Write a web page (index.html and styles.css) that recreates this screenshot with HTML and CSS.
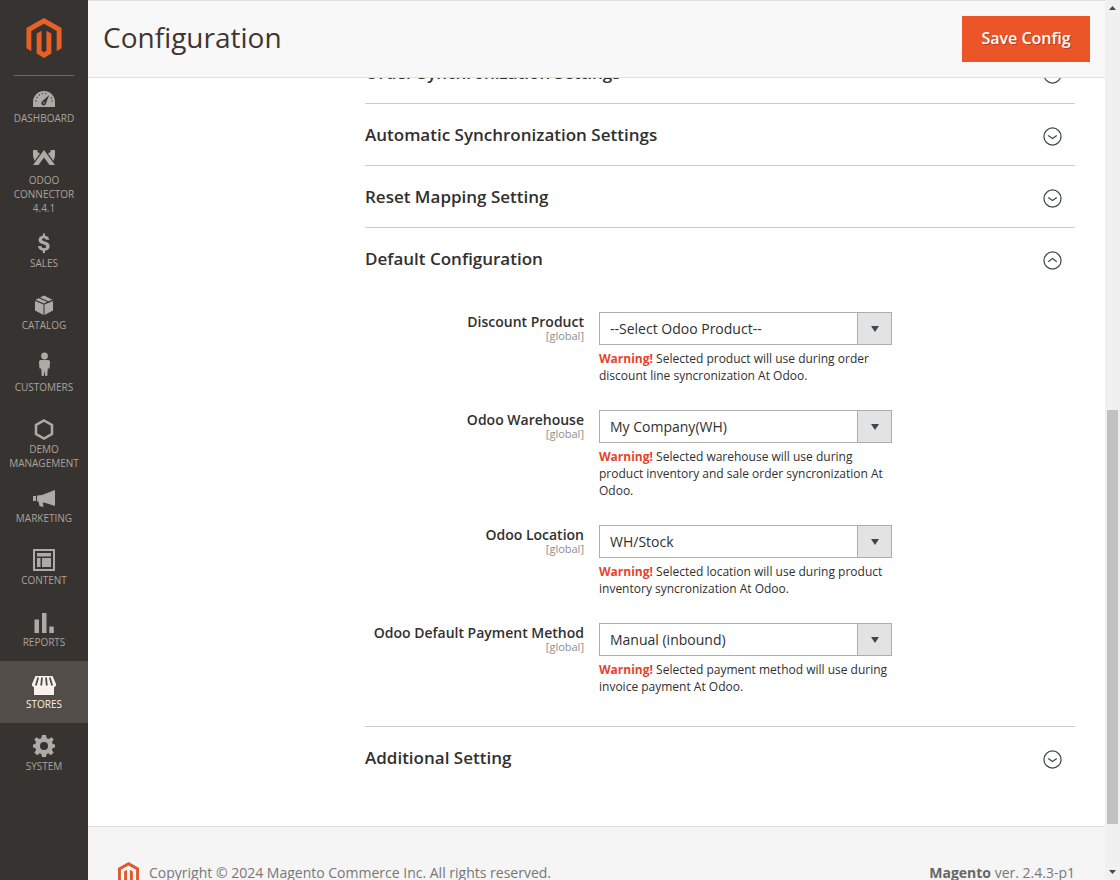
FILE: index.html
```html
<!DOCTYPE html>
<html lang="en">
<head>
<meta charset="utf-8">
<title>Configuration / Magento Admin</title>
<link rel="stylesheet" href="styles.css">
</head>
<body>
<svg class="defs" aria-hidden="true">
  <symbol id="magento" viewBox="0 0 36 41">
    <path d="M18 0L36 10.300V31L31 34V13.300L18 5.800L5 13.300V34L0 31V10.300Z"/>
    <path d="M10.500 16L15.500 13V33.500L18 35L20.500 33.500V13L25.500 16V36.500L18 41L10.500 36.500Z"/>
  </symbol>
  <symbol id="down" viewBox="0 0 20 20"><circle cx="10" cy="10" r="9"/><path d="M5.500 9L10 12.200L14.500 9"/></symbol>
  <symbol id="up" viewBox="0 0 20 20"><circle cx="10" cy="10" r="9"/><path d="M5.500 11.200L10 8L14.500 11.200"/></symbol>
</svg>
<div class="app">
  <nav class="menu" aria-label="Main">
    <a class="logo" href="#" aria-label="Magento"><svg><use href="#magento"/></svg></a>
    <ul class="menu-list">
      <li><a class="item" href="#"><svg viewBox="0 -1 24 24"><path d="M1 20V15a11 11 0 0 1 22 0V20Z"/><g class="cut"><circle cx="4" cy="14" r=".7"/><circle cx="5" cy="10.500" r=".7"/><circle cx="7.500" cy="8" r=".7"/><circle cx="10.500" cy="6.600" r=".7"/><circle cx="13.700" cy="6.600" r=".7"/><circle cx="19.300" cy="11" r=".7"/><circle cx="20" cy="14" r=".7"/><path d="M17.200 8L10.300 14.200a2.300 2.300 0 1 0 3.600 2.300Z"/></g><circle cx="11.900" cy="15.800" r=".8"/></svg><span>Dashboard</span></a></li>
      <li><a class="item" href="#"><svg viewBox="0 0 24 24"><path d="M12 2L23 17H17.500L12 9.500L6.500 17H1Z"/><path d="M1 2H5.500V4L8 5.500L2.500 13L1 8Z"/><path d="M23 2H18.500V4L16 5.500L21.500 13L23 8Z"/></svg><span>Odoo Connector 4.4.1</span></a></li>
      <li><a class="item" href="#"><svg viewBox="0 0 24 24"><path d="M10.800 2.500H13V4.700C15.500 5 17 6.500 17.300 8.800H14C13.700 7.700 13 7.200 12 7.200C10.800 7.200 10 7.700 10 8.600C10 9.500 10.800 9.800 13 10.400C16 11.200 17.600 12.600 17.600 15.200C17.600 17.700 15.900 19.400 13 19.700V22H10.800V19.700C8 19.400 6.200 17.700 6 15H9.300C9.600 16.600 10.500 17.200 12 17.200C13.400 17.200 14.200 16.500 14.200 15.500C14.200 14.400 13.400 13.900 11 13.300C8.100 12.500 6.600 11.300 6.600 8.800C6.600 6.500 8.300 5 10.800 4.700Z"/></svg><span>Sales</span></a></li>
      <li><a class="item" href="#"><svg viewBox="0 0 24 24"><path d="M3 8L11.500 11.500V22L3 17.500Z"/><path d="M21 8L12.500 11.500V22L21 17.500Z"/><path d="M3.500 6.700L6.800 5.200L15 8.800L12 10.400Z"/><path d="M8 4.600L12 2.500L20.500 6.700L16.300 8.300Z"/></svg><span>Catalog</span></a></li>
      <li><a class="item" href="#"><svg viewBox="0 2 24 24"><circle cx="12.500" cy="3" r="3.400"/><path d="M9 7H16A2 2 0 0 1 18 9.500L17.500 15.500H15.800L15.300 23H13.300L12.500 18L11.700 23H9.700L9.200 15.500H7.500L7 9.500A2 2 0 0 1 9 7Z"/></svg><span>Customers</span></a></li>
      <li><a class="item" href="#"><svg viewBox="0 0 24 24"><path class="outline" d="M12 3.500L20 8V17L12 21.500L4 17V8Z"/></svg><span>Demo Management</span></a></li>
      <li><a class="item" href="#"><svg viewBox="0 -1 24 24"><path d="M1 9H4V14H1ZM5 8.500L10 8L23 3V19L12 15.500L10.800 15.700L11.500 20L7.500 19L6.500 14.500H5Z"/></svg><span>Marketing</span></a></li>
      <li><a class="item" href="#"><svg viewBox="0 0 24 24"><path fill-rule="evenodd" d="M1 1H23V23H1ZM3 3V21H21V3Z"/><path d="M5 5H19V8.500H5ZM5 10H8.500V19H5ZM10 10H19V19H10Z"/></svg><span>Content</span></a></li>
      <li><a class="item" href="#"><svg viewBox="0 0 24 24"><path d="M2.500 9.500H7V23H2.500ZM10 3H14.500V23H10ZM17.300 16.500H21.800V23H17.300Z"/></svg><span>Reports</span></a></li>
      <li><a class="item active" href="#" aria-current="page"><svg viewBox="0 0 24 24"><path d="M3.500 4H20.500L24 12V13A2 2 0 0 1 22 15V23H2V15A2 2 0 0 1 0 13V12Z"/><path class="slit" d="M6.200 5.500L3.800 13.500M10 5.500L9.200 13.500M14 5.500L14.800 13.500M17.800 5.500L20.200 13.500"/></svg><span>Stores</span></a></li>
      <li><a class="item" href="#"><svg viewBox="0 0 24 24"><path fill-rule="evenodd" d="M10 1H14L14.700 4.200L16.700 5L19.600 3.300L21.700 5.400L19.900 8.200L20.700 10L23 10.500V13.500L20.700 14L19.900 15.900L21.700 18.700L18.700 21.200L16.300 19.300L14.700 20L14 23H10L9.300 20L7.700 19.300L5.300 21.200L2.300 18.700L4.100 15.900L3.300 14L1 13.500V10.500L3.300 10L4.100 8.200L2.300 5.400L4.400 3.300L7.300 5L9.300 4.200ZM12 8A4 4 0 1 0 12 16A4 4 0 1 0 12 8Z"/></svg><span>System</span></a></li>
    </ul>
  </nav>

  <div class="page">
    <header class="page-header">
      <h1>Configuration</h1>
      <button class="primary" type="button">Save Config</button>
    </header>

    <main class="content">
      <section class="group">
        <h2><button class="toggle" type="button" aria-expanded="false">Order Synchronization Settings<svg><use href="#down"/></svg></button></h2>
      </section>
      <section class="group">
        <h2><button class="toggle" type="button" aria-expanded="false">Automatic Synchronization Settings<svg><use href="#down"/></svg></button></h2>
      </section>
      <section class="group">
        <h2><button class="toggle" type="button" aria-expanded="false">Reset Mapping Setting<svg><use href="#down"/></svg></button></h2>
      </section>
      <section class="group">
        <h2><button class="toggle" type="button" aria-expanded="true">Default Configuration<svg><use href="#up"/></svg></button></h2>
        <div class="fields">
          <div class="field">
            <div class="caption"><label for="product">Discount Product</label><small>[global]</small></div>
            <div class="value">
              <div class="picker"><select id="product"><option>--Select Odoo Product--</option></select><span class="arrow"></span></div>
              <p class="note"><b>Warning!</b> Selected product will use during order discount line syncronization At Odoo.</p>
            </div>
          </div>
          <div class="field">
            <div class="caption"><label for="warehouse">Odoo Warehouse</label><small>[global]</small></div>
            <div class="value">
              <div class="picker"><select id="warehouse"><option>My Company(WH)</option></select><span class="arrow"></span></div>
              <p class="note"><b>Warning!</b> Selected warehouse will use during product inventory and sale order syncronization At Odoo.</p>
            </div>
          </div>
          <div class="field">
            <div class="caption"><label for="location">Odoo Location</label><small>[global]</small></div>
            <div class="value">
              <div class="picker"><select id="location"><option>WH/Stock</option></select><span class="arrow"></span></div>
              <p class="note"><b>Warning!</b> Selected location will use during product inventory syncronization At Odoo.</p>
            </div>
          </div>
          <div class="field">
            <div class="caption"><label for="payment">Odoo Default Payment Method</label><small>[global]</small></div>
            <div class="value">
              <div class="picker"><select id="payment"><option>Manual (inbound)</option></select><span class="arrow"></span></div>
              <p class="note"><b>Warning!</b> Selected payment method will use during invoice payment At Odoo.</p>
            </div>
          </div>
        </div>
      </section>
      <section class="group">
        <h2><button class="toggle" type="button" aria-expanded="false">Additional Setting<svg><use href="#down"/></svg></button></h2>
      </section>
    </main>

    <footer class="page-footer">
      <p class="copyright"><svg><use href="#magento"/></svg>Copyright © 2024 Magento Commerce Inc. All rights reserved.</p>
      <p><b>Magento</b> ver. 2.4.3-p1</p>
    </footer>
  </div>

  <div class="scrollbar" aria-hidden="true">
    <svg viewBox="0 0 15 15"><path d="M4 10L7.500 6L11 10Z"/></svg>
    <div class="track-before"></div>
    <div class="thumb"></div>
    <div class="track-after"></div>
    <svg viewBox="0 0 15 15"><path d="M4 5L7.500 9L11 5Z"/></svg>
  </div>
</div>
</body>
</html>
```
FILE: styles.css
```css
* { box-sizing: border-box; }

body {
  margin: 0;
  background: #fff;
  color: #303030;
  font-family: "Open Sans", "Noto Sans", sans-serif;
  font-size: 14px;
}

h1, h2, p, ul { margin: 0; padding: 0; }
button, select { font: inherit; color: inherit; }

.defs { position: absolute; width: 0; height: 0; }

.app { display: flex; height: 100vh; overflow: hidden; }

/* Side menu */
.menu { flex: 0 0 88px; background: #373330; }

.logo {
  display: flex;
  justify-content: center;
  height: 76px;
  margin: 0 14px;
  padding-top: 18px;
  border-bottom: 1px solid #736963;
}

.logo svg { width: 36px; height: 40px; fill: #e96027; }

.menu-list { margin-top: -1px; list-style: none; }

.item {
  display: flex;
  flex-direction: column;
  align-items: center;
  gap: 1px;
  min-height: 62px;
  padding: 11px 4px 5px;
  color: #a9a39c;
  font-size: 10px;
  line-height: 14px;
  text-align: center;
  text-decoration: none;
  text-transform: uppercase;
}

.item svg { width: 24px; height: 24px; overflow: visible; fill: #aeaaa5; }
.item .cut { fill: #373330; }
.item .outline { fill: none; stroke: #aeaaa5; stroke-width: 2.5; }
.item .slit { fill: none; stroke: #524d49; stroke-width: 1.8; }
.item.active { background: #524d49; color: #f7f3eb; }
.item.active svg { fill: #f7f3eb; }

/* Page */
.page { display: flex; flex: 1; flex-direction: column; min-width: 0; }

.page-header {
  z-index: 1;
  display: flex;
  flex: none;
  align-items: center;
  justify-content: space-between;
  height: 78px;
  padding: 0 15px;
  border: solid #e0e0e0;
  border-width: 1px 0;
  background: #f8f8f8;
}

h1 { padding-bottom: 4px; color: #41362f; font-size: 28px; font-weight: 400; line-height: 36px; }

.primary {
  min-width: 128px;
  height: 46px;
  padding: 0 16px 2px;
  border: 0;
  background: #eb5528;
  color: #fff;
  font-size: 16px;
  font-weight: 600;
  text-shadow: 1px 1px 0 rgba(0, 0, 0, .25);
}

.content {
  flex: none;
  margin-top: -36px;
  padding: 0 30px 38px 277px;
}

.group { border-bottom: 1px solid #ccc; }
.group:last-child { border-bottom: 0; }
.group h2 { font-size: 17px; font-weight: 600; line-height: 24px; }

.toggle {
  display: flex;
  align-items: center;
  justify-content: space-between;
  width: 100%;
  height: 61px;
  padding: 0 13px 0 0;
  border: 0;
  background: none;
  text-align: left;
}

.toggle svg { width: 19px; height: 19px; margin-top: 3px; fill: none; stroke: #41464a; stroke-width: 1.3; }

.fields {
  display: grid;
  gap: 26px;
  padding: 23px 0 31px;
}

.field { display: grid; grid-template-columns: 234fr 293fr 183fr; }

.caption {
  display: flex;
  flex-direction: column;
  padding-right: 15px;
  text-align: right;
}

.caption label { font-weight: 600; line-height: 19px; }
.caption small { color: #8e8e8e; font-size: 11px; line-height: 9px; }

.picker { display: grid; color: #303030; }
.picker > * { grid-area: 1 / 1; }

select {
  width: 100%;
  height: 33px;
  padding: 0 44px 0 10px;
  border: 1px solid #adadad;
  border-radius: 0;
  background: #fff;
  appearance: none;
}

.arrow {
  display: grid;
  place-items: center;
  justify-self: end;
  width: 35px;
  border: 1px solid #adadad;
  background: #e3e3e3;
  pointer-events: none;
}

.arrow::before {
  content: "";
  border: solid transparent;
  border-width: 6px 4px 0;
  border-top-color: #41464a;
}

.note { margin-top: 5px; font-size: 12px; line-height: 17px; }
.note b { color: #e8432e; font-weight: 700; }

.page-footer {
  display: flex;
  flex: 1 0 auto;
  align-items: flex-start;
  justify-content: space-between;
  padding: 35px 30px 30px;
  border-top: 1px solid #ddd;
  background: #f5f5f5;
  color: #777;
  line-height: 22px;
}

.page-footer b { color: #666; font-weight: 700; }
.copyright { display: flex; gap: 10px; }
.copyright svg { width: 21px; height: 24px; fill: #e0592c; }

/* Scrollbar */
.scrollbar {
  display: flex;
  flex: 0 0 15px;
  flex-direction: column;
  background: #f0f0f0;
}

.scrollbar svg { flex: none; width: 15px; height: 15px; fill: #484848; }
.track-before { flex: 395; }
.thumb { flex: 414; margin: 0 2px; background: #c1c1c1; }
.track-after { flex: 41; }
```
